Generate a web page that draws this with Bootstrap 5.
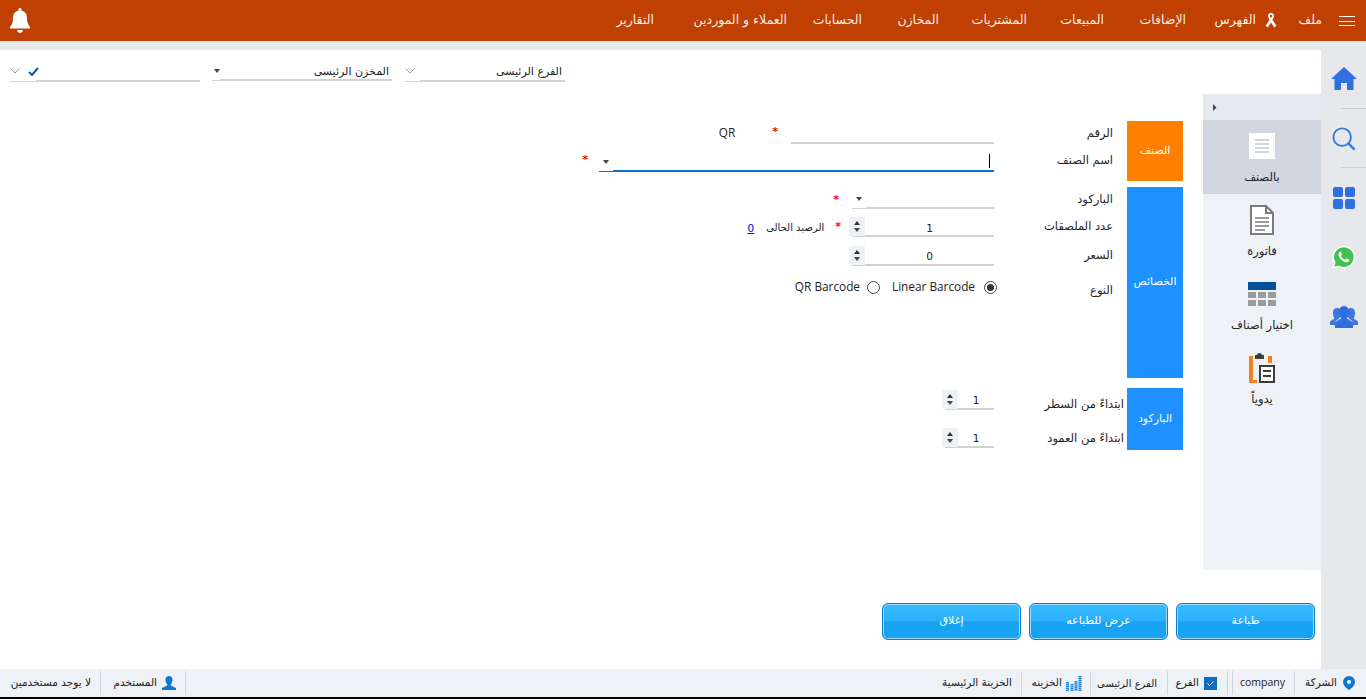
<!DOCTYPE html>
<html lang="ar" dir="rtl">
<head>
<meta charset="utf-8">
<title>طباعة الباركود</title>
<link href="https://cdn.jsdelivr.net/npm/bootstrap@5.3.0/dist/css/bootstrap.min.css" rel="stylesheet">
<style>
html,body{height:699px;overflow:hidden}
body{background:#000;font-family:"DejaVu Sans","Noto Sans",sans-serif;font-size:11.5px;color:#222}
.app-shell{height:697px;background:#e6e8ec;display:flex;flex-direction:column}
.top-bar{height:41px;background:#bf4000;color:#f4ece6;font-size:12.5px;padding:0 11px 0 10px}
.burger{width:16px;height:10px;border-top:1px solid #fff;border-bottom:1px solid #fff;position:relative;margin-left:17px}
.burger::after{content:"";position:absolute;left:0;right:0;top:4px;border-top:1px solid #fff}
.nav-items{display:flex;align-items:center}
.nav-items svg{margin-left:9px}
.nav-items span{display:block;white-space:nowrap;text-align:right}
.n1{width:45px}.n2{width:70px}.n3{width:82px}.n4{width:77px}.n5{width:88px}.n6{width:77px}.n7{width:75px}.n8{width:133px}.n9{width:50px}
.mid{flex:1;display:flex;margin-top:9px;min-height:0}
.rail{width:45px;flex:none;display:flex;flex-direction:column;align-items:center}
.rail-cell{height:60px;display:flex;align-items:center;justify-content:center;width:100%;position:relative}
.rc1{height:59px;padding:0 0 3px 0}.rc2{height:59px}.rc3{height:59px}.rc5{height:59px}
.rail-cell.lined::after{content:"";position:absolute;bottom:0;right:0;width:25px;border-bottom:1px solid #ccd0d6}
.page-area{flex:1;background:#fff;display:flex;flex-direction:column;min-width:0}
.filters{height:44px;display:flex;align-items:flex-start;padding-top:10px}
.pick{height:22px;display:flex;align-items:center;position:relative;font-size:11px}
.pick::after{content:"";position:absolute;bottom:0;right:0;border-bottom:2px solid #d2d2d2}
.pick::before{content:"";position:absolute;bottom:0;left:0;border-bottom:1px solid #d2d2d2}
.p1{width:160px;margin-right:756px}.p1::after{left:15px}.p1::before{width:15px}
.p2{width:180px;margin-right:13px;height:21px}.p2::after{left:8px}.p2::before{width:8px}
.p3{width:190px;margin-right:12px}.p3::after{left:26px}.p3::before{width:26px}
.pick .txt{flex:1;padding:3px 3px 0 0}
.p2 .dn{margin-left:2px}
.body-row{display:flex;height:476px}
.side-tabs{width:118px;flex:none;background:#eef1f6}
.tabs-head{height:26px;background:#e6eaf0;display:flex;align-items:center;justify-content:flex-end;padding-left:9px}
.tab-item{height:74px;display:flex;flex-direction:column;align-items:center;font-size:11.5px;color:#222}
.tab-item .ic{height:49px;display:flex;align-items:center;justify-content:center;padding-top:3px}
.tab-item.active{background:#d0d7e0}
.form-zone{flex:1;padding:27px 20px 0 0;min-width:0}
.fgroup{display:flex;align-items:flex-start;margin-bottom:6px}
.glabel{width:56px;flex:none;color:#fff;display:flex;align-items:center;justify-content:center;font-size:11px}
.g-org{background:#ff7f00;height:60px}
.g-blue{background:#1e90ff}
.g-b1{height:191px}.g-b2{height:62px}.gap-g3{margin-top:10px}
.frows{flex:1;min-width:0}
.frow{display:flex;align-items:flex-end;position:relative}
.flabel{width:133px;flex:none;padding-right:14px;line-height:12px;white-space:nowrap}
.flabel.wide{padding-right:3px}
.frow-a{height:23px}.frow-b{height:28px}.frow-c{height:22px}.frow-d{height:28px}.frow-e{height:29px}.frow-f{height:42px;align-items:center}.frow-g{height:22px}.frow-h{height:38px}
.frow-a .flabel{padding-bottom:5px}.frow-b .flabel{padding-bottom:6px}.frow-c .flabel{padding-bottom:4px}.frow-d .flabel,.frow-e .flabel{padding-bottom:5px}.frow-f .flabel{padding-top:5px}.frow-h .flabel{padding-bottom:4px}
.inp{height:22px;border-bottom:2px solid #d2d2d2;display:flex;align-items:center;position:relative;font-size:10.5px}
.inp.focus{border-bottom-color:#0b75c4}
.w203{width:203px}.w395{width:395px}.w142{width:142px}.w145{width:142px}.w51{width:49px}
.val{flex:1;text-align:center;padding-top:6px}
.frow-d .val{padding-top:8px}
.spin{width:16px;height:19px;background:#eef1f5;margin-left:-3px;margin-bottom:-1px;align-self:flex-end;display:flex;flex-direction:column;align-items:center;justify-content:center;gap:3px;flex:none}
.up{display:block;width:0;height:0;border-left:3.5px solid transparent;border-right:3.5px solid transparent;border-bottom:4px solid #333}
.dn{display:block;width:0;height:0;border-left:3.5px solid transparent;border-right:3.5px solid transparent;border-top:4px solid #444}
.drop{width:14px;display:flex;justify-content:center;align-items:center;align-self:stretch;margin-bottom:-2px;background:#fff;border-bottom:1px solid #d2d2d2;padding-top:3px}
.focus .drop{border-bottom-color:#0b75c4}
.req{color:#f00;font-size:11px;font-weight:700;line-height:11px}
.frow-a .req,.frow-b .req{margin-bottom:7px}.frow-c .req{margin-bottom:4px}.frow-d .req{margin-bottom:5px}
.star-a{margin-right:13px}.star-b{margin-right:11px}.star-c{margin-right:13px}.star-d{margin-right:11px}
.qr-lbl{margin-right:37px;margin-bottom:2px}
.bal-lbl{margin-right:11px;line-height:12px;margin-bottom:3px;font-size:10px;white-space:nowrap}
.bal{color:#00e;text-decoration:underline;margin-right:12px;line-height:12px;margin-bottom:3px;font-size:10.5px}
.caret-line{display:block;width:1px;height:14px;background:#000;margin-right:4px;margin-top:2px}
.radio{width:13px;height:13px;border:1px solid #444;border-radius:50%;display:block;position:relative;flex:none;background:#fff}
.radio.on{margin-right:-3px}
.radio.on::after{content:"";position:absolute;inset:2px;border-radius:50%;background:#333}
.latin{font-family:"Open Sans","Noto Sans",sans-serif;font-size:11.8px}
.t-linear{margin-right:9px}.r-qr{margin-right:12px}.t-qr{margin-right:7px}
.btn-row{display:flex;gap:8px;padding:33px 6px 0 0}
.act-btn{width:139px;height:37px;border-radius:6px;border:1px solid #0b7cc9;box-shadow:inset 0 0 0 1px #9fdcff;background:linear-gradient(#36bbff 0,#2cb0fb 48%,#18a2f2 52%,#18a2f2 100%);color:#fff;font-size:11px;padding:0}
.status{height:28px;background:#eef1f6;display:flex;justify-content:space-between;font-size:10.5px;color:#222}
.st-group{display:flex;align-items:center;height:100%}
.st{display:flex;align-items:center;gap:5px;height:24px;white-space:nowrap;border-left:1px solid #d2d6dc;padding-right:10px;flex:none}
.st.no-line{border-left:0}
.st svg{flex:none}
.s1{width:72px;padding-right:11px;gap:6px}
.s2{width:62px;padding-right:9px;font-family:"Open Sans",sans-serif}
.s3{width:61px;margin-right:4px;border-right:1px solid #d2d6dc}
.s4{width:77px;font-size:10px}.s5{width:69px;padding-right:8px;gap:4px}
.s6{padding-right:9px}
.s7{width:86px;padding-right:9px;border-right:1px solid #d2d6dc}
.s8{width:100px;padding-right:9px}
</style>
</head>
<body>
<div class="app-shell">
  <header class="top-bar d-flex align-items-center justify-content-between">
    <div class="d-flex align-items-center">
      <div class="burger"></div>
      <div class="nav-items">
        <span class="n1">ملف</span>
        <svg width="12" height="15" viewBox="0 0 14 18"><path fill="#fff" d="M7 0c2 0 3.500 1.300 3.500 3.200 0 1.400-.7 3-1.800 5l4.800 7-2.600 2.300L7 11.300 3.100 17.500.5 15.200l4.800-7C4.200 6.200 3.500 4.600 3.500 3.200 3.500 1.300 5 0 7 0zm0 2.200c-.8 0-1.300.4-1.300 1.100 0 .6.500 1.600 1.300 2.900.8-1.300 1.300-2.300 1.300-2.900 0-.7-.5-1.100-1.300-1.100z"/></svg>
        <span class="n2">الفهرس</span>
        <span class="n3">الإضافات</span>
        <span class="n4">المبيعات</span>
        <span class="n5">المشتريات</span>
        <span class="n6">المخازن</span>
        <span class="n7">الحسابات</span>
        <span class="n8">العملاء و الموردين</span>
        <span class="n9">التقارير</span>
      </div>
    </div>
    <svg width="20" height="25" viewBox="0 0 20 25"><path fill="#fff" d="M10 0c.9 0 1.500.6 1.500 1.500v1C15 3.300 17 6 17 10c0 4.500 1 6.500 3 9v1.500H0V19c2-2.500 3-4.500 3-9 0-4 2-6.700 5.500-7.500v-1C8.500.6 9.100 0 10 0zM7 22h6c-.3 1.800-1.500 3-3 3s-2.700-1.200-3-3z"/></svg>
  </header>

  <div class="mid">
    <aside class="rail">
      <div class="rail-cell rc1 lined"><svg width="26" height="23" viewBox="0 0 26 23"><path fill="#2f6fde" d="M13 0 0 12h3.500v11H10v-7h6v7h6.500V12H26z"/></svg></div>
      <div class="rail-cell rc2 lined"><svg width="24" height="24" viewBox="0 0 26 26"><circle cx="11" cy="11" r="9.500" fill="none" stroke="#2f78de" stroke-width="2"/><path d="m18 18 6.500 6.500" stroke="#2f78de" stroke-width="2.500"/></svg></div>
      <div class="rail-cell rc3"><svg width="22" height="22" viewBox="0 0 22 22"><g fill="#2f6fde"><rect width="10" height="10" rx="2"/><rect x="12" width="10" height="10" rx="2"/><rect y="12" width="10" height="10" rx="2"/><rect x="12" y="12" width="10" height="10" rx="2"/></g></svg></div>
      <div class="rail-cell rc4"><svg width="25" height="25" viewBox="0 0 26 26"><path fill="#fff" d="M1 25l1.800-6.300A12 12 0 1 1 7.500 23.300z"/><path fill="#3fc350" d="M3.500 22.500l1.300-4.300a10.200 10.200 0 1 1 3.200 3.100z"/><path fill="#fff" d="M9.300 7.300c-.5 0-1.400.8-1.400 2.500 0 2 1.300 3.900 2.700 5.300 1.700 1.700 3.800 2.800 5.600 2.800 1.600 0 2.600-1.100 2.700-2 .1-.5 0-.7-.2-.8l-2.300-1.100c-.3-.1-.5-.1-.7.100l-.9 1.100c-.2.200-.4.200-.7.100-1.600-.7-3-2-3.700-3.500-.1-.3-.1-.5.100-.7l.7-.9c.1-.2.200-.4.100-.7l-1-2.400c-.1-.2-.4-.3-1-.3z"/></svg></div>
      <div class="rail-cell rc5"><svg width="28" height="22" viewBox="0 0 28 22"><path fill="#3b78dc" d="M7 2c3 0 4 2.500 4 5 0 2-.8 4-1.800 5.200L5 16v3H0v-3.500l4.500-3C3.500 11 3 9 3 7c0-2.500 1-5 4-5zm14 0c3 0 4 2.500 4 5 0 2-.5 4-1.500 5.500l4.500 3V19h-5v-3l-4.200-3.800C17.800 11 17 9 17 7c0-2.500 1-5 4-5z"/><path fill="#2f6fde" d="M14 0c3.800 0 5 3 5 6 0 2.300-.8 4.700-2.200 6.300L23 16.500V22H5v-5.500l6.200-4.200C9.800 10.700 9 8.300 9 6c0-3 1.200-6 5-6z"/></svg></div>
    </aside>

    <main class="page-area">
      <div class="filters">
        <div class="pick p1"><span class="txt">الفرع الرئيسى</span><svg width="10" height="6" viewBox="0 0 10 6" class="me-1"><path d="m.5.500 4.500 4.500L9.500.5" fill="none" stroke="#999"/></svg></div>
        <div class="pick p2"><span class="txt">المخزن الرئيسى</span><span class="dn"></span></div>
        <div class="pick p3"><span class="txt"></span><svg width="11" height="9" viewBox="0 0 11 9"><path d="m1 5 3 3 6-7" fill="none" stroke="#0b5a9c" stroke-width="2"/></svg><svg width="10" height="6" viewBox="0 0 10 6" class="me-2"><path d="m.5.500 4.500 4.500L9.500.5" fill="none" stroke="#999"/></svg></div>
      </div>
      <div class="body-row">
        <aside class="side-tabs">
          <div class="tabs-head"><svg width="5" height="7" viewBox="0 0 5 7"><path d="M1 0l3.500 3.500L1 7z" fill="#444"/></svg></div>
          <div class="tab-item active">
            <div class="ic"><svg width="26" height="26" viewBox="0 0 26 26"><rect width="26" height="26" fill="#fff"/><path d="M6 7h14M6 11h14M6 15h14M6 19h14" stroke="#cfd5de" stroke-width="2"/></svg></div>
            <span>بالصنف</span>
          </div>
          <div class="tab-item">
            <div class="ic"><svg width="24" height="30" viewBox="0 0 24 30"><path d="M1 1h15l7 7v21H1z" fill="#fff" stroke="#7a7a7a" stroke-width="2"/><path d="M16 1v7h7" fill="none" stroke="#7a7a7a" stroke-width="2"/><path d="M5 13h14M5 17h14M5 21h14M5 25h10" stroke="#9a9a9a" stroke-width="2"/></svg></div>
            <span>فاتورة</span>
          </div>
          <div class="tab-item">
            <div class="ic"><svg width="28" height="24" viewBox="0 0 28 24"><rect width="28" height="8" fill="#004f9e"/><g fill="#9b9b9b"><rect y="10" width="8" height="6"/><rect x="10" y="10" width="8" height="6"/><rect x="20" y="10" width="8" height="6"/><rect y="18" width="8" height="6"/><rect x="10" y="18" width="8" height="6"/><rect x="20" y="18" width="8" height="6"/></g></svg></div>
            <span>اختيار أصناف</span>
          </div>
          <div class="tab-item">
            <div class="ic"><svg width="26" height="30" viewBox="0 0 26 30"><path d="M0 3h4v24h4v3H0zM19 3h4v7h-4z" fill="#f5801f"/><path d="M6 2h2c0-1 1-2 2.500-2S13 1 13 2h2v4H6z" fill="#3c3c3c"/><rect x="11" y="13" width="14" height="16" fill="#fff" stroke="#3c3c3c" stroke-width="2"/><path d="M14 18h8M14 23h8" stroke="#3c3c3c" stroke-width="2"/></svg></div>
            <span>يدوياً</span>
          </div>
        </aside>

        <section class="form-zone">
          <div class="fgroup">
            <div class="glabel g-org">الصنف</div>
            <div class="frows">
              <div class="frow frow-a"><div class="flabel">الرقم</div><div class="inp w203"></div><span class="req star-a">*</span><span class="latin qr-lbl">QR</span></div>
              <div class="frow frow-b"><div class="flabel">اسم الصنف</div><div class="inp w395 focus"><span class="caret-line"></span><span class="flex-grow-1"></span><span class="drop"><span class="dn"></span></span></div><span class="req star-b">*</span></div>
            </div>
          </div>
          <div class="fgroup">
            <div class="glabel g-blue g-b1">الخصائص</div>
            <div class="frows">
              <div class="frow frow-c"><div class="flabel">الباركود</div><div class="inp w142"><span class="flex-grow-1"></span><span class="drop"><span class="dn"></span></span></div><span class="req star-c">*</span></div>
              <div class="frow frow-d"><div class="flabel">عدد الملصقات</div><div class="inp w145"><span class="val">1</span><span class="spin"><span class="up"></span><span class="dn"></span></span></div><span class="req star-d">*</span><span class="bal-lbl">الرصيد الحالى</span><a href="#" class="bal">0</a></div>
              <div class="frow frow-e"><div class="flabel">السعر</div><div class="inp w145"><span class="val">0</span><span class="spin"><span class="up"></span><span class="dn"></span></span></div></div>
              <div class="frow frow-f"><div class="flabel">النوع</div><span class="radio on"></span><span class="latin t-linear">Linear Barcode</span><span class="radio r-qr"></span><span class="latin t-qr">QR Barcode</span></div>
            </div>
          </div>
          <div class="fgroup gap-g3">
            <div class="glabel g-blue g-b2">الباركود</div>
            <div class="frows">
              <div class="frow frow-g"><div class="flabel wide">ابتداءً من السطر</div><div class="inp w51"><span class="val">1</span><span class="spin"><span class="up"></span><span class="dn"></span></span></div></div>
              <div class="frow frow-h"><div class="flabel wide">ابتداءً من العمود</div><div class="inp w51"><span class="val">1</span><span class="spin"><span class="up"></span><span class="dn"></span></span></div></div>
            </div>
          </div>
        </section>
      </div>
      <div class="btn-row">
        <button class="act-btn">طباعة</button>
        <button class="act-btn">عرض للطباعه</button>
        <button class="act-btn">إغلاق</button>
      </div>
    </main>
  </div>

  <footer class="status">
    <div class="st-group">
      <div class="st s1"><svg width="12" height="14" viewBox="0 0 12 14"><path fill="#0b78d1" d="M6 0a6 6 0 0 1 6 6c0 3-3 6-6 8-3-2-6-5-6-8a6 6 0 0 1 6-6z"/><circle cx="6" cy="6" r="2" fill="#fff"/></svg><span>الشركة</span></div>
      <div class="st s2"><span>company</span></div>
      <div class="st s3"><svg width="13" height="13" viewBox="0 0 13 13"><rect width="13" height="13" fill="#0b6fc9"/><path d="m3.500 6.500 2 2 4-4" stroke="#fff" fill="none"/></svg><span>الفرع</span></div>
      <div class="st s4"><span>الفرع الرئيسى</span></div>
      <div class="st s5"><svg width="16" height="16" viewBox="0 0 16 16"><path d="M1.500 7v9M6 9v7M10 6v10M14 1v15" stroke="#1b84d8" stroke-width="3" stroke-dasharray="1.500 .5"/></svg><span>الخزينه</span></div>
      <div class="st s6 no-line"><span>الخزينة الرئيسية</span></div>
    </div>
    <div class="st-group">
      <div class="st s7"><svg width="14" height="14" viewBox="0 0 14 14"><path fill="#0b78d1" d="M7 0c2.200 0 3.500 1.600 3.500 3.800S9.500 7.500 8.800 8.300v1.200L14 12v2H0v-2l5.200-2.500V8.300C4.500 7.500 3.500 6 3.500 3.800S4.800 0 7 0z"/></svg><span>المستخدم</span></div>
      <div class="st s8 no-line"><span>لا يوجد مستخدمين</span></div>
    </div>
  </footer>
</div>
</body>
</html>
